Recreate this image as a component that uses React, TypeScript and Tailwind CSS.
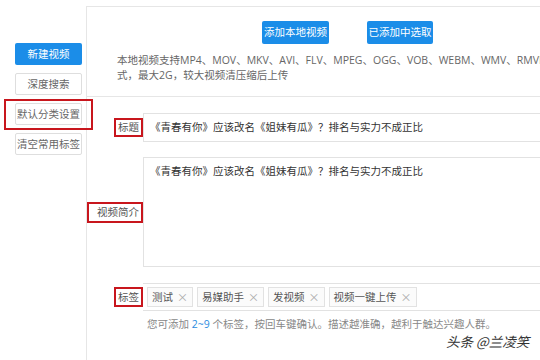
import React from "react";

const font = { fontFamily: '"Open Sans", "Noto Sans CJK SC", sans-serif' };
const cjk = { fontFamily: '"Noto Sans CJK SC", sans-serif' };

function SideBtn({ children, primary }: { children: React.ReactNode; primary?: boolean }) {
  return (
    <div
      className={
        "w-[67px] h-[22px] flex items-center justify-center text-[10.5px] leading-none rounded-[2px] " +
        (primary
          ? "bg-[#1b8de8] text-white"
          : "bg-white border border-[#dedede] text-[#666]")
      }
    >
      {children}
    </div>
  );
}

function Chip({ text }: { text: string }) {
  return (
    <div className="h-[20px] flex items-center gap-[4px] px-[4px] border border-[#e2e2e2] bg-[#fbfbfb] text-[10.5px] text-[#555] leading-none">
      <span>{text}</span>
      <span className="text-[#aaa] text-[11px]" style={cjk}>×</span>
    </div>
  );
}

export default function App() {
  return (
    <div
      className="relative w-[540px] h-[360px] overflow-hidden bg-white flex text-[#555]"
      style={font}
    >
      {/* left column */}
      <div className="w-[86px] shrink-0 pt-[43px] pl-[15px] flex flex-col gap-[8px]">
        <SideBtn primary>新建视频</SideBtn>
        <SideBtn>深度搜索</SideBtn>
        <div className="relative">
          <SideBtn>默认分类设置</SideBtn>
          <div className="absolute left-[-11px] top-[-4px] w-[89px] h-[31px] border-2 border-[#c8161d]" />
        </div>
        <SideBtn>清空常用标签</SideBtn>
      </div>

      {/* main panel */}
      <div className="mt-[6px] w-[640px] shrink-0 border-l border-t border-[#e6e6e6] flex flex-col">
        {/* upload area */}
        <div className="border-b border-[#e6e6e6] pt-[14px] pb-[13px]">
          <div className="flex gap-[38px] pl-[175px]">
            <div className="w-[67px] h-[23px] flex items-center justify-center bg-[#1b8de8] text-white text-[10.5px] rounded-[2px] leading-none">
              添加本地视频
            </div>
            <div className="w-[66px] h-[23px] flex items-center justify-center bg-[#1b8de8] text-white text-[10.5px] rounded-[2px] leading-none">
              已添加中选取
            </div>
          </div>
          <p className="mt-[9px] pl-[30px] whitespace-nowrap text-[10.5px] leading-[15px] text-[#666]">
            本地视频支持MP4、MOV、MKV、AVI、FLV、MPEG、OGG、VOB、WEBM、WMV、RMVB等格
            <br />
            式，最大2G，较大视频清压缩后上传
          </p>
        </div>

        {/* title row */}
        <div className="mt-[16px] flex items-center">
          <div className="w-[56px] flex justify-end">
            <div className="h-[19px] w-[29px] border-2 border-[#c8161d] flex items-center justify-center text-[10.5px] text-[#555] leading-none">
              标题
            </div>
          </div>
          <div className="flex-1 h-[29px] border border-[#e2e2e2] flex items-center pl-[6px] text-[10.5px] text-[#333] leading-none">
            《青春有你》应该改名《姐妹有瓜》？排名与实力不成正比
          </div>
        </div>

        {/* description row */}
        <div className="mt-[15px] flex items-center">
          <div className="w-[56px] flex justify-end">
            <div className="h-[21px] w-[56px] border-2 border-[#c8161d] flex items-center justify-end pr-[2px] text-[10.5px] text-[#555] leading-none">
              视频简介
            </div>
          </div>
          <div className="flex-1 h-[110px] border border-[#e2e2e2] pl-[6px] pt-[6px] text-[10.5px] text-[#333] leading-[15px]">
            《青春有你》应该改名《姐妹有瓜》？排名与实力不成正比
          </div>
        </div>

        {/* tags row */}
        <div className="mt-[16px] flex items-center">
          <div className="w-[56px] flex justify-end">
            <div className="h-[20px] w-[29px] border-2 border-[#c8161d] flex items-center justify-center text-[10.5px] text-[#555] leading-none">
              标签
            </div>
          </div>
          <div className="flex-1 h-[28px] border-y border-[#e2e2e2] flex items-center gap-[4px] pl-[4px]">
            <Chip text="测试" />
            <Chip text="易媒助手" />
            <Chip text="发视频" />
            <Chip text="视频一键上传" />
          </div>
        </div>

        <p className="mt-[6px] pl-[60px] text-[10.5px] leading-[15px] text-[#888]">
          您可添加 <span className="text-[#2a8ce0]">2~9</span> 个标签，按回车键确认。描述越准确，越利于触达兴趣人群。
        </p>
      </div>

      {/* watermark */}
      <div
        className="absolute left-[446px] top-[335px] text-[13.5px] leading-none italic text-[#333]"
        style={{ ...cjk, textShadow: "0 0 2px #fff, 0 0 2px #fff" }}
      >
        头条 @兰凌笑
      </div>
    </div>
  );
}
